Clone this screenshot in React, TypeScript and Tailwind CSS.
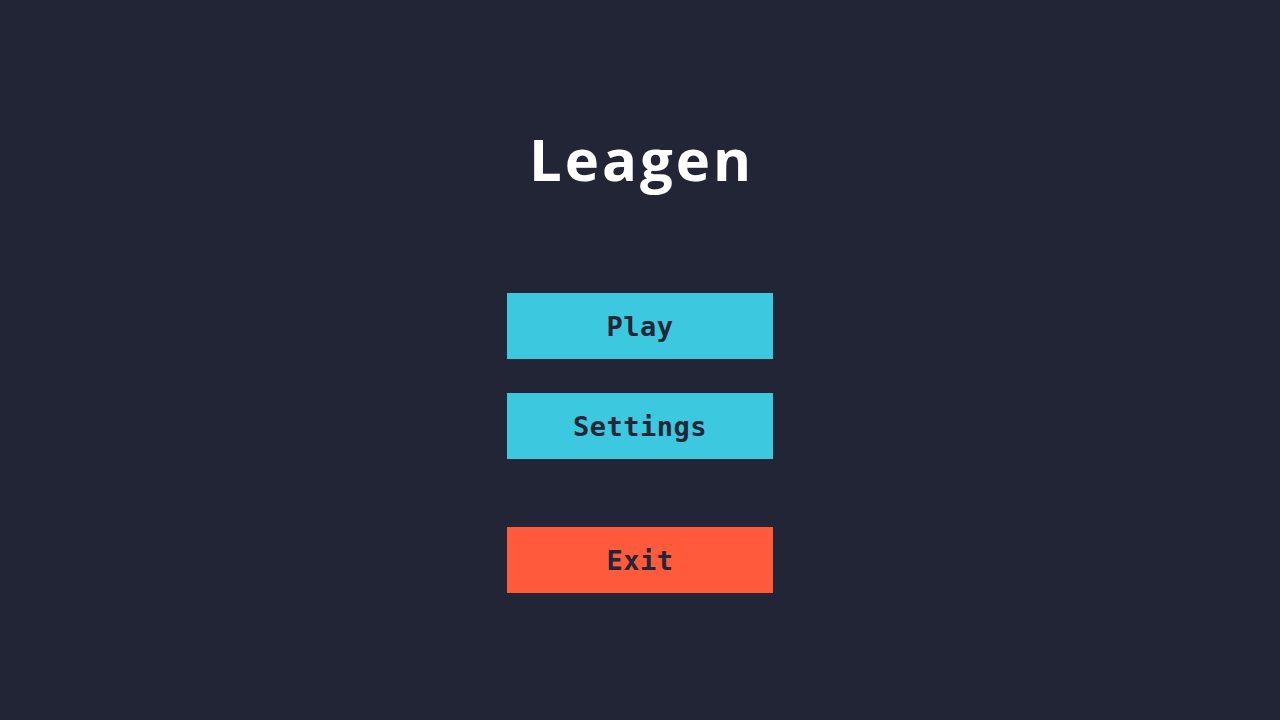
const MenuButton = ({ label, color }: { label: string; color: string }) => (
  <button
    className={`w-[266px] h-[66px] ${color} text-[#222636] text-[27px] font-bold tracking-[0.5px] pt-[2px]`}
    style={{ fontFamily: '"DejaVu Sans Mono", "Liberation Mono", monospace' }}
  >
    {label}
  </button>
);

const App = () => {
  return (
    <div className="min-h-screen w-full bg-[#222535] flex flex-col items-center pt-[127px]">
      <h1
        className="h-[64px] leading-[64px] text-[58px] font-bold text-white tracking-[3px] pl-[3px]"
        style={{ fontFamily: '"Open Sans", "Noto Sans", sans-serif' }}
      >
        Leagen
      </h1>
      <div className="mt-[102px] flex flex-col gap-[34px]">
        <MenuButton label="Play" color="bg-[#3cc8de]" />
        <MenuButton label="Settings" color="bg-[#3cc8de]" />
      </div>
      <div className="mt-[68px]">
        <MenuButton label="Exit" color="bg-[#ff5a3c]" />
      </div>
    </div>
  );
};

export default App;
